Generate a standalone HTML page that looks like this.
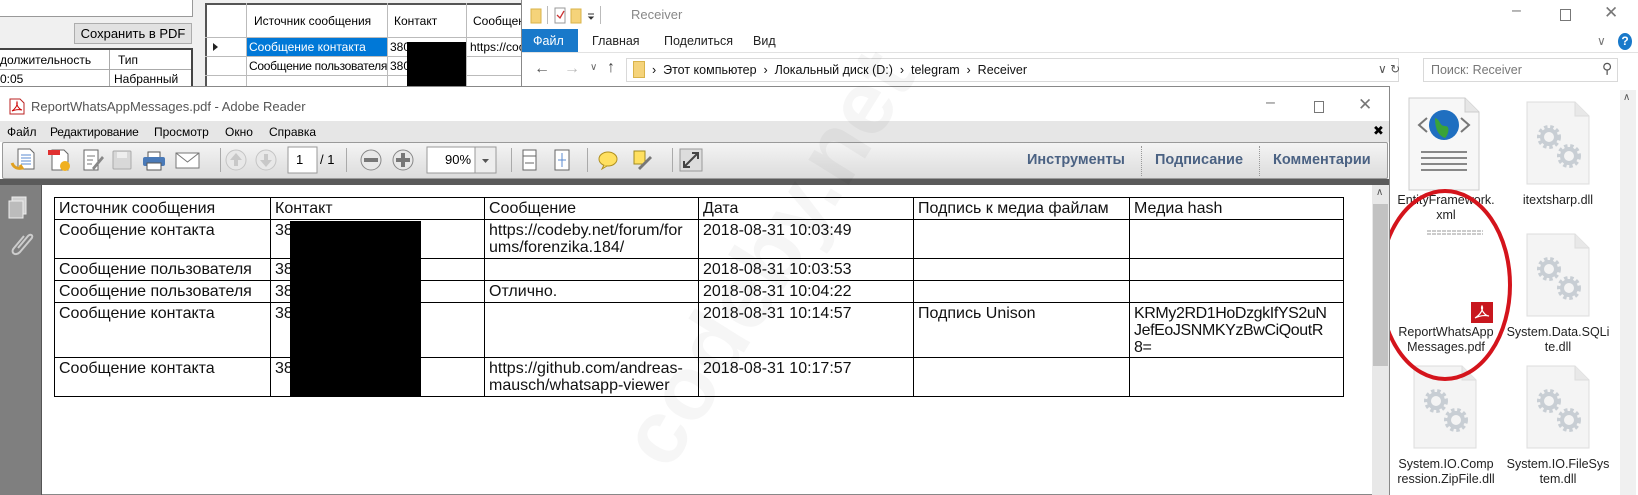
<!DOCTYPE html>
<html><head><meta charset="utf-8"><style>
*{margin:0;padding:0;box-sizing:border-box}
body{width:1638px;height:495px;overflow:hidden;position:relative;background:#f0f0f0;font-family:"Liberation Sans","DejaVu Sans",sans-serif;color:#000}
.a{position:absolute}
.t{position:absolute;white-space:nowrap}
.cell{position:absolute;border:1.5px solid #000;font-size:16px;line-height:17px;padding:2px 0 0 4px;white-space:pre;background:#fff;color:#111;overflow:hidden}
.ico{position:absolute}
</style></head><body>

<!-- left background window -->
<div class="a" style="left:0;top:0;width:193px;height:17px;background:#fff;border-right:1px solid #999;border-bottom:1px solid #999"></div>
<div class="a" style="left:74px;top:23px;width:118px;height:21px;background:#e1e1e1;border:1px solid #adadad;font-size:13px;text-align:center;line-height:19px">Сохранить в PDF</div>
<div class="a" style="left:0;top:48px;width:193px;height:40px;background:#fff;border-top:2px solid #444;border-right:2px solid #444"></div>
<div class="a" style="left:0;top:69px;width:191px;height:1px;background:#aaa"></div>
<div class="a" style="left:109px;top:50px;width:1px;height:38px;background:#aaa"></div>
<div class="t" style="left:0;top:53px;font-size:12px">должительность</div>
<div class="t" style="left:118px;top:53px;font-size:12px">Тип</div>
<div class="t" style="left:0;top:72px;font-size:12px">0:05</div>
<div class="t" style="left:114px;top:72px;font-size:12px">Набранный</div>

<!-- middle grid -->
<div class="a" style="left:205px;top:3px;width:320px;height:90px;background:#fff;border-left:2px solid #555;border-top:2px solid #555"></div>
<div class="a" style="left:246px;top:3px;width:1px;height:90px;background:#bbb"></div>
<div class="a" style="left:387px;top:3px;width:1px;height:90px;background:#bbb"></div>
<div class="a" style="left:466px;top:3px;width:1px;height:90px;background:#bbb"></div>
<div class="a" style="left:205px;top:37px;width:320px;height:1px;background:#bbb"></div>
<div class="a" style="left:205px;top:56px;width:320px;height:1px;background:#bbb"></div>
<div class="a" style="left:205px;top:75px;width:320px;height:1px;background:#bbb"></div>
<div class="t" style="left:254px;top:14px;font-size:12px">Источник сообщения</div>
<div class="t" style="left:394px;top:14px;font-size:12px">Контакт</div>
<div class="t" style="left:473px;top:14px;font-size:12px">Сообщени</div>
<div class="a" style="left:213px;top:43px;width:0;height:0;border-left:5px solid #222;border-top:4px solid transparent;border-bottom:4px solid transparent"></div>
<div class="a" style="left:247px;top:38px;width:140px;height:18px;background:#0078d7"></div>
<div class="t" style="left:249px;top:40px;font-size:12px;color:#fff">Сообщение контакта</div>
<div class="t" style="left:390px;top:40px;font-size:12px">380</div>
<div class="t" style="left:470px;top:40px;font-size:12px">https://coo</div>
<div class="t" style="left:249px;top:59px;font-size:12px;letter-spacing:-0.3px">Сообщение пользователя</div>
<div class="t" style="left:390px;top:59px;font-size:12px">380</div>
<div class="a" style="left:407px;top:42px;width:59px;height:50px;background:#000"></div>

<!-- explorer window -->
<div class="a" style="left:521px;top:0;width:1117px;height:495px;background:#fff;border-left:1px solid #888"></div>
<svg class="ico" style="left:530px;top:6px" width="100" height="20">
<path d="M1 3h10v14H1z" fill="#f5d37a" stroke="#d9b34a"/>
<rect x="17" y="0" width="1" height="18" fill="#bbb"/>
<rect x="25" y="2" width="10" height="15" fill="#fff" stroke="#999"/><path d="M27 9l3 3 4-7" stroke="#c33" fill="none" stroke-width="1.3"/>
<path d="M41 3h10v14H41z" fill="#f5d37a" stroke="#d9b34a"/>
<path d="M58 8h6M59 11h4l-2 2z" stroke="#333" fill="#333"/>
<rect x="70" y="0" width="1" height="18" fill="#bbb"/>
</svg>
<div class="t" style="left:631px;top:7px;font-size:13px;color:#888">Receiver</div>
<div class="t" style="left:1512px;top:2px;font-size:16px;color:#777">–</div>
<div class="a" style="left:1560px;top:9px;width:11px;height:12px;border:1px solid #777"></div>
<div class="t" style="left:1604px;top:3px;font-size:17px;color:#777">✕</div>
<div class="a" style="left:522px;top:29px;width:56px;height:23px;background:#1979ca"></div>
<div class="t" style="left:533px;top:34px;font-size:12.5px;color:#fff">Файл</div>
<div class="t" style="left:592px;top:34px;font-size:12.5px;color:#222">Главная</div>
<div class="t" style="left:664px;top:34px;font-size:12.5px;color:#222">Поделиться</div>
<div class="t" style="left:753px;top:34px;font-size:12.5px;color:#222">Вид</div>
<div class="t" style="left:1597px;top:34px;font-size:12px;color:#777">∨</div>
<div class="a" style="left:1618px;top:33px;width:14px;height:17px;border-radius:50%;background:#1979ca;color:#fff;font-size:12px;font-weight:bold;text-align:center;line-height:17px">?</div>
<div class="a" style="left:522px;top:52px;width:1116px;height:1px;background:#e2e2e2"></div>
<div class="t" style="left:534px;top:60px;font-size:16px;color:#555">←</div>
<div class="t" style="left:564px;top:60px;font-size:16px;color:#bbb">→</div>
<div class="t" style="left:590px;top:62px;font-size:10px;color:#666">∨</div>
<div class="t" style="left:607px;top:59px;font-size:16px;color:#444">↑</div>
<div class="a" style="left:626px;top:58px;width:773px;height:24px;border:1px solid #d9d9d9"></div>
<div class="a" style="left:633px;top:61px;width:12px;height:17px;background:#f5d37a;border:1px solid #d9b34a"></div>
<div class="t" style="left:652px;top:63px;font-size:12.5px;color:#111">›&nbsp; Этот компьютер &nbsp;›&nbsp; Локальный диск (D:) &nbsp;›&nbsp; telegram &nbsp;›&nbsp; Receiver</div>
<div class="t" style="left:1378px;top:62px;font-size:12px;color:#555">∨ ↻</div>
<div class="a" style="left:624px;top:86px;width:463px;height:3px;background:#d0202a;border-radius:2px"></div>
<div class="a" style="left:1423px;top:58px;width:195px;height:24px;border:1px solid #d9d9d9"></div>
<div class="t" style="left:1431px;top:63px;font-size:12.5px;color:#777">Поиск: Receiver</div>
<div class="t" style="left:1602px;top:60px;font-size:14px;color:#555">⚲</div>
<div class="a" style="left:1620px;top:90px;width:16px;height:405px;background:#f0f0f0"></div>
<div class="t" style="left:1623px;top:92px;font-size:10px;color:#555">∧</div>

<!-- explorer file icons -->
<svg class="ico" style="left:1405px;top:96px" width="230" height="360">
<defs><g id="gear"><circle cx="0" cy="0" r="9" fill="none" stroke="#c8ced4" stroke-width="6" stroke-dasharray="3 2.4"/><circle cx="0" cy="0" r="7" fill="none" stroke="#c8ced4" stroke-width="4"/></g></defs>
<path d="M4 2h56l14 14v78H4z" fill="#f7f7f7" stroke="#ccc"/>
<path d="M60 2v14h14" fill="#e6e6e6" stroke="#ccc"/>
<circle cx="39" cy="29" r="15" fill="#1f6fc0"/><path d="M30 22c6 2 4 8 10 8s3 9 0 12c-6-2-10-8-10-20z" fill="#3aa33a"/>
<path d="M22 22l-8 7 8 7M56 22l8 7-8 7" stroke="#777" fill="none" stroke-width="2"/>
<path d="M16 56h46M16 62h46M16 68h46M16 74h46" stroke="#888" stroke-width="2"/>
<g transform="translate(122,6)"><path d="M0 0h48l14 14v68H0z" fill="#f4f4f4" stroke="#ddd"/><path d="M48 0v14h14" fill="#e8e8e8" stroke="#ddd"/><use href="#gear" x="22" y="35"/><use href="#gear" x="42" y="54"/></g>
<g transform="translate(122,138)"><path d="M0 0h48l14 14v68H0z" fill="#f4f4f4" stroke="#ddd"/><path d="M48 0v14h14" fill="#e8e8e8" stroke="#ddd"/><use href="#gear" x="22" y="35"/><use href="#gear" x="42" y="54"/></g>
<g transform="translate(9,270)"><path d="M0 0h48l14 14v68H0z" fill="#f4f4f4" stroke="#ddd"/><path d="M48 0v14h14" fill="#e8e8e8" stroke="#ddd"/><use href="#gear" x="22" y="35"/><use href="#gear" x="42" y="54"/></g>
<g transform="translate(122,270)"><path d="M0 0h48l14 14v68H0z" fill="#f4f4f4" stroke="#ddd"/><path d="M48 0v14h14" fill="#e8e8e8" stroke="#ddd"/><use href="#gear" x="22" y="35"/><use href="#gear" x="42" y="54"/></g>
<rect x="66" y="206" width="22" height="21" fill="#c8171e"/><path d="M70 222c5-3 9-9 7-12-2 3 3 10 7 10-5-1-10 0-14 2z" stroke="#fff" fill="none" stroke-width="1.2"/>
<path d="M22 135h56M22 138h56" stroke="#999" stroke-dasharray="4 1"/>
</svg>
<div class="t" style="left:1446px;top:193px;transform:translateX(-50%);font-size:12.5px;text-align:center;line-height:15px;color:#222">EntityFramework.<br>xml</div>
<div class="t" style="left:1558px;top:193px;transform:translateX(-50%);font-size:12.5px;color:#222">itextsharp.dll</div>
<div class="t" style="left:1446px;top:325px;transform:translateX(-50%);font-size:12.5px;text-align:center;line-height:15px;color:#222">ReportWhatsApp<br>Messages.pdf</div>
<div class="t" style="left:1558px;top:325px;transform:translateX(-50%);font-size:12.5px;text-align:center;line-height:15px;color:#222">System.Data.SQLi<br>te.dll</div>
<div class="t" style="left:1446px;top:457px;transform:translateX(-50%);font-size:12.5px;text-align:center;line-height:15px;color:#222">System.IO.Comp<br>ression.ZipFile.dll</div>
<div class="t" style="left:1558px;top:457px;transform:translateX(-50%);font-size:12.5px;text-align:center;line-height:15px;color:#222">System.IO.FileSys<br>tem.dll</div>
<svg class="ico" style="left:1370px;top:185px" width="150" height="200"><ellipse cx="75" cy="100" rx="65" ry="94" fill="none" stroke="#d4141c" stroke-width="4"/></svg>

<!-- adobe reader window -->
<div class="a" style="left:0;top:86px;width:1390px;height:409px;background:#fff;border:1px solid #888;border-left:none"></div>
<svg class="ico" style="left:9px;top:98px" width="16" height="17"><path d="M1 1h10l4 4v11H1z" fill="#fff" stroke="#b22"/><path d="M3 13c3-2 6-6 5-9-1 3 2 7 5 8-4-1-7 0-10 1z" stroke="#c00" fill="none"/></svg>
<div class="t" style="left:31px;top:99px;font-size:13px;color:#555">ReportWhatsAppMessages.pdf - Adobe Reader</div>
<div class="t" style="left:1266px;top:94px;font-size:16px;color:#777">–</div>
<div class="a" style="left:1314px;top:101px;width:10px;height:12px;border:1px solid #777"></div>
<div class="t" style="left:1358px;top:95px;font-size:17px;color:#777">✕</div>
<div class="a" style="left:0;top:121px;width:1389px;height:21px;background:#e6e6e6"></div>
<div class="t" style="left:7px;top:125px;font-size:12px">Файл</div>
<div class="t" style="left:50px;top:125px;font-size:12px;letter-spacing:-0.2px">Редактирование</div>
<div class="t" style="left:154px;top:125px;font-size:12px">Просмотр</div>
<div class="t" style="left:225px;top:125px;font-size:12px">Окно</div>
<div class="t" style="left:269px;top:125px;font-size:12px">Справка</div>
<div class="t" style="left:1373px;top:123px;font-size:13px;font-weight:bold">✖</div>
<div class="a" style="left:2px;top:142px;width:1386px;height:37px;background:linear-gradient(#f4f4f4,#dcdcdc);border:1px solid #9a9a9a;border-radius:2px"></div>
<svg class="ico" style="left:8px;top:144px" width="700" height="32">
<path d="M10 5h12l4 4v16H10z" fill="#fff" stroke="#666"/><path d="M13 11h10M13 14h10M13 17h10M13 20h10" stroke="#5b8bd0"/><path d="M4 19c2 5 6 6 10 5l-2-3" stroke="#e0a020" stroke-width="3" fill="none"/>
<path d="M44 6h12l4 4v16H44z" fill="#fff" stroke="#666"/><rect x="40" y="6" width="12" height="5" fill="#e03030"/><circle cx="57" cy="22" r="5" fill="#f0b020"/>
<path d="M76 6h14v20H76z" fill="#fff" stroke="#666"/><path d="M79 12h8M79 16h6M79 20h5" stroke="#777"/><path d="M84 24l10-12 2 2-10 12z" fill="#888"/>
<rect x="105" y="7" width="18" height="18" rx="1" fill="#d8d8d8" stroke="#aaa"/><rect x="109" y="8" width="10" height="6" fill="#eee"/>
<rect x="140" y="8" width="12" height="6" fill="#fff" stroke="#555"/><rect x="135" y="13" width="22" height="9" rx="2" fill="#4a7ab8"/><rect x="139" y="19" width="14" height="7" fill="#fff" stroke="#555"/>
<rect x="168" y="9" width="23" height="15" fill="#fff" stroke="#777"/><path d="M168 9l11.5 9 11.5-9" stroke="#777" fill="none"/>
<rect x="212" y="4" width="1" height="24" fill="#aaa"/>
<circle cx="228" cy="16" r="10" fill="#e8e8e8" stroke="#c4c4c4"/><path d="M228 9l-6 7h4v6h4v-6h4z" fill="#c8c8c8"/>
<circle cx="258" cy="16" r="10" fill="#e8e8e8" stroke="#c4c4c4"/><path d="M258 23l-6-7h4v-6h4v6h4z" fill="#c8c8c8"/>
<rect x="280" y="3" width="29" height="26" fill="#fff" stroke="#999"/>
<rect x="338" y="4" width="1" height="24" fill="#aaa"/>
<circle cx="363" cy="16" r="10" fill="#e8e8e8" stroke="#888"/><rect x="356" y="14" width="14" height="4" fill="#777"/>
<circle cx="395" cy="16" r="10" fill="#e8e8e8" stroke="#888"/><rect x="388" y="14" width="14" height="4" fill="#777"/><rect x="393" y="9" width="4" height="14" fill="#777"/>
<rect x="419" y="3" width="69" height="26" fill="#fff" stroke="#999"/><rect x="467" y="3" width="21" height="26" fill="#eee" stroke="#999"/><path d="M474 15h7l-3.5 4z" fill="#555"/>
<rect x="503" y="4" width="1" height="24" fill="#aaa"/>
<rect x="515" y="6" width="13" height="20" fill="#fff" stroke="#666"/><path d="M515 12h13M517 19h9" stroke="#666"/>
<rect x="547" y="6" width="14" height="20" fill="#fff" stroke="#666"/><path d="M554 9v14M550 16h8" stroke="#5b8bd0"/>
<rect x="579" y="4" width="1" height="24" fill="#aaa"/>
<ellipse cx="600" cy="15" rx="9" ry="7" fill="#ffe060" stroke="#b09020"/><path d="M596 21l-2 4 5-3" fill="#ffe060" stroke="#b09020"/>
<rect x="626" y="7" width="11" height="13" fill="#ffe060" stroke="#a08a20"/><path d="M630 24l12-12 2 2-12 12z" fill="#777"/>
<rect x="664" y="4" width="1" height="24" fill="#aaa"/>
<rect x="672" y="5" width="22" height="22" fill="#ddd" stroke="#999"/><path d="M676 23l14-14M684 9h6v6M676 17v6h6" stroke="#444" stroke-width="2" fill="none"/>
</svg>
<div class="t" style="left:296px;top:152px;font-size:13px">1</div>
<div class="t" style="left:320px;top:152px;font-size:13px">/ 1</div>
<div class="t" style="left:445px;top:152px;font-size:13px">90%</div>
<div class="t" style="left:1027px;top:152px;font-size:14.5px;font-weight:bold;color:#4b6283">Инструменты</div>
<div class="a" style="left:1141px;top:146px;height:30px;border-left:1px dotted #999"></div>
<div class="t" style="left:1155px;top:152px;font-size:14.5px;font-weight:bold;color:#4b6283">Подписание</div>
<div class="a" style="left:1259px;top:146px;height:30px;border-left:1px dotted #999"></div>
<div class="t" style="left:1273px;top:152px;font-size:14.5px;font-weight:bold;color:#4b6283">Комментарии</div>
<div class="a" style="left:0;top:179px;width:1389px;height:6px;background:#5a5a5a"></div>
<div class="a" style="left:0;top:185px;width:42px;height:310px;background:#7f7f7f;border-right:1px solid #555"></div>
<svg class="ico" style="left:8px;top:196px" width="28" height="60"><rect x="4" y="1" width="14" height="17" fill="#d0d0d0" stroke="#eee"/><rect x="1" y="5" width="14" height="17" fill="#bcbcbc" stroke="#eee"/><path d="M10 52l10-12c3-3 6 0 3 3l-11 13c-5 5-10 0-6-4l10-12" stroke="#ccc" stroke-width="2" fill="none"/></svg>
<div class="a" style="left:1372px;top:185px;width:17px;height:310px;background:#e8e8e8"></div>
<div class="a" style="left:1373px;top:204px;width:15px;height:162px;background:#c2c2c2"></div>
<div class="t" style="left:1376px;top:187px;font-size:10px;color:#555">∧</div>

<!-- pdf table -->
<div class="cell" style="left:54px;top:197px;width:218px;height:24px">Источник сообщения</div>
<div class="cell" style="left:270px;top:197px;width:216px;height:24px">Контакт</div>
<div class="cell" style="left:484px;top:197px;width:216px;height:24px">Сообщение</div>
<div class="cell" style="left:698px;top:197px;width:217px;height:24px">Дата</div>
<div class="cell" style="left:913px;top:197px;width:218px;height:24px">Подпись к медиа файлам</div>
<div class="cell" style="left:1129px;top:197px;width:215px;height:24px">Медиа hash</div>

<div class="cell" style="left:54px;top:219px;width:218px;height:41px">Сообщение контакта</div>
<div class="cell" style="left:270px;top:219px;width:216px;height:41px">38</div>
<div class="cell" style="left:484px;top:219px;width:216px;height:41px">https://codeby.net/forum/for
ums/forenzika.184/</div>
<div class="cell" style="left:698px;top:219px;width:217px;height:41px">2018-08-31 10:03:49</div>
<div class="cell" style="left:913px;top:219px;width:218px;height:41px"></div>
<div class="cell" style="left:1129px;top:219px;width:215px;height:41px"></div>

<div class="cell" style="left:54px;top:258px;width:218px;height:24px">Сообщение пользователя</div>
<div class="cell" style="left:270px;top:258px;width:216px;height:24px">38</div>
<div class="cell" style="left:484px;top:258px;width:216px;height:24px"></div>
<div class="cell" style="left:698px;top:258px;width:217px;height:24px">2018-08-31 10:03:53</div>
<div class="cell" style="left:913px;top:258px;width:218px;height:24px"></div>
<div class="cell" style="left:1129px;top:258px;width:215px;height:24px"></div>

<div class="cell" style="left:54px;top:280px;width:218px;height:24px">Сообщение пользователя</div>
<div class="cell" style="left:270px;top:280px;width:216px;height:24px">38</div>
<div class="cell" style="left:484px;top:280px;width:216px;height:24px">Отлично.</div>
<div class="cell" style="left:698px;top:280px;width:217px;height:24px">2018-08-31 10:04:22</div>
<div class="cell" style="left:913px;top:280px;width:218px;height:24px"></div>
<div class="cell" style="left:1129px;top:280px;width:215px;height:24px"></div>

<div class="cell" style="left:54px;top:302px;width:218px;height:57px">Сообщение контакта</div>
<div class="cell" style="left:270px;top:302px;width:216px;height:57px">38</div>
<div class="cell" style="left:484px;top:302px;width:216px;height:57px"></div>
<div class="cell" style="left:698px;top:302px;width:217px;height:57px">2018-08-31 10:14:57</div>
<div class="cell" style="left:913px;top:302px;width:218px;height:57px">Подпись Unison</div>
<div class="cell" style="left:1129px;top:302px;width:215px;height:57px;letter-spacing:-0.4px">KRMy2RD1HoDzgkIfYS2uN
JefEoJSNMKYzBwCiQoutR
8=</div>

<div class="cell" style="left:54px;top:357px;width:218px;height:40px">Сообщение контакта</div>
<div class="cell" style="left:270px;top:357px;width:216px;height:40px">38</div>
<div class="cell" style="left:484px;top:357px;width:216px;height:40px">https://github.com/andreas-
mausch/whatsapp-viewer</div>
<div class="cell" style="left:698px;top:357px;width:217px;height:40px">2018-08-31 10:17:57</div>
<div class="cell" style="left:913px;top:357px;width:218px;height:40px"></div>
<div class="cell" style="left:1129px;top:357px;width:215px;height:40px"></div>

<div class="a" style="left:290px;top:221px;width:131px;height:176px;background:#000"></div>

<div class="t" style="left:600px;top:430px;font-size:90px;font-weight:bold;color:rgba(0,0,0,0.035);transform:rotate(-58deg);transform-origin:left top">codeby.net</div>
</body></html>
